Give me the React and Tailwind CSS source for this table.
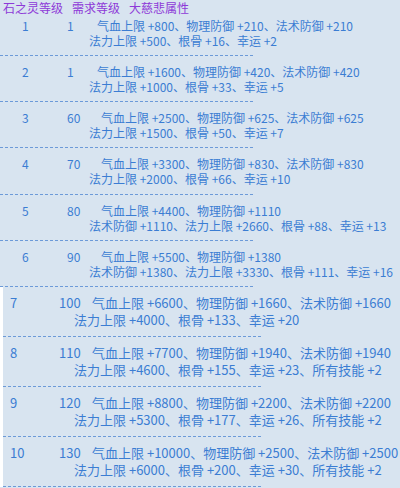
import React from 'react'

const rowsA = [
    ['1', '1', '气血上限 +800、物理防御 +210、法术防御 +210', '法力上限 +500、根骨 +16、幸运 +2', 'ml-0'],
    ['2', '1', '气血上限 +1600、物理防御 +420、法术防御 +420', '法力上限 +1000、根骨 +33、幸运 +5', 'ml-0'],
    ['3', '60', '气血上限 +2500、物理防御 +625、法术防御 +625', '法力上限 +1500、根骨 +50、幸运 +7', 'ml-[4px]'],
    ['4', '70', '气血上限 +3300、物理防御 +830、法术防御 +830', '法力上限 +2000、根骨 +66、幸运 +10', 'ml-[4px]'],
    ['5', '80', '气血上限 +4400、物理防御 +1110', '法术防御 +1110、法力上限 +2660、根骨 +88、幸运 +13', 'ml-[4px]'],
    ['6', '90', '气血上限 +5500、物理防御 +1380', '法术防御 +1380、法力上限 +3330、根骨 +111、幸运 +16', 'ml-[4px]'],
];

const rowsB = [
    ['7', '100', '气血上限 +6600、物理防御 +1660、法术防御 +1660', '法力上限 +4000、根骨 +133、幸运 +20'],
    ['8', '110', '气血上限 +7700、物理防御 +1940、法术防御 +1940', '法力上限 +4600、根骨 +155、幸运 +23、所有技能 +2'],
    ['9', '120', '气血上限 +8800、物理防御 +2200、法术防御 +2200', '法力上限 +5300、根骨 +177、幸运 +26、所有技能 +2'],
    ['10', '130', '气血上限 +10000、物理防御 +2500、法术防御 +2500', '法力上限 +6000、根骨 +200、幸运 +30、所有技能 +2'],
];

const Dashes = ({ w }) => (
    <div className={`h-px ${w} bg-[repeating-linear-gradient(90deg,#6c9ad8_0_3px,transparent_3px_5px)]`}></div>
);

const App = () => {
    const main = () => (
        <div
            className="w-[400px] h-[488px] overflow-hidden bg-[#d8e4f0] text-[#3b7dd3] whitespace-nowrap"
            style={{ fontFamily: '"Noto Sans CJK SC", "Noto Sans", sans-serif' }}
        >
            {/* primera parte, letra 12px */}
            <div className="text-[12px] leading-[15px]">
                <div className="h-4 leading-4 pl-[3px] text-[#8e3ad8] flex">
                    <span>石之灵等级</span>
                    <span className="ml-[9px]">需求等级</span>
                    <span className="ml-[9px]">大慈悲属性</span>
                </div>
                {rowsA.map((r, i) => (
                    <div key={r[0]}>
                        <div className={`flex pl-[22px] ${i === 0 ? 'pt-[1.5px]' : 'pt-2'} pb-[7.3px]`}>
                            <span className="w-[45px]">{r[0]}</span>
                            <div className="flex flex-col">
                                <div className="flex">
                                    <span className="w-[30px]">{r[1]}</span>
                                    <span className={r[4]}>{r[2]}</span>
                                </div>
                                <div className="pl-[22px]">{r[3]}</div>
                            </div>
                        </div>
                        <Dashes w="w-[255px]" />
                    </div>
                ))}
            </div>

            {/* segunda parte, letra 13px */}
            <div className="text-[13px] leading-[17px] border-l-[3px] border-white">
                {rowsB.map((r) => (
                    <div key={r[0]}>
                        <div className="flex pl-[7px] pt-[7px] pb-2">
                            <span className="w-[49px]">{r[0]}</span>
                            <div className="flex flex-col">
                                <div className="flex">
                                    <span className="w-[33px]">{r[1]}</span>
                                    <span>{r[2]}</span>
                                </div>
                                <div className="pl-[15px]">{r[3]}</div>
                            </div>
                        </div>
                        <Dashes w="w-[260px]" />
                    </div>
                ))}
            </div>
        </div>
    )

    return <>{main()}</>;
}

export default App
